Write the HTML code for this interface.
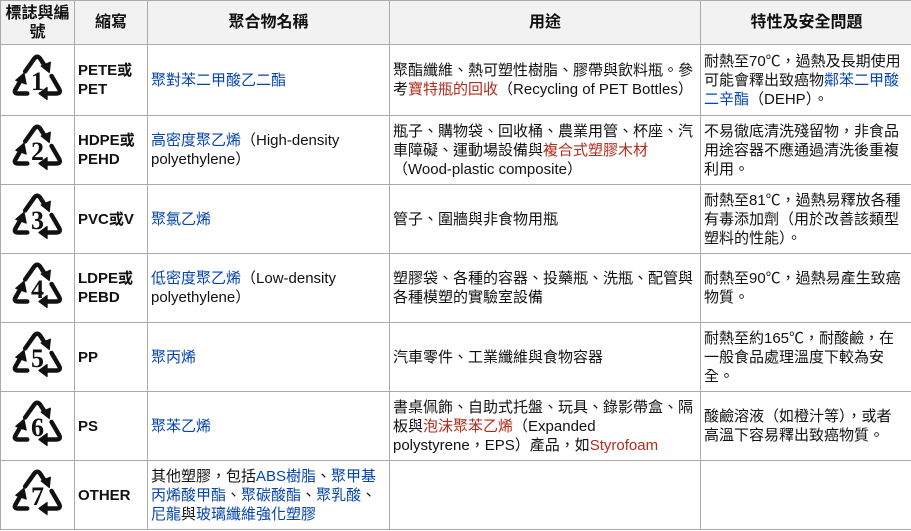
<!DOCTYPE html>
<html><head><meta charset="utf-8"><style>
body{margin:0;background:#fff;font-family:"Liberation Sans","Noto Sans CJK TC",sans-serif;font-size:15px;color:#111;}
table{border-collapse:collapse;position:absolute;left:0;top:0;width:912px;table-layout:fixed}
td,th{border:1px solid #aaa;padding:0 3px;line-height:19px;vertical-align:middle;text-align:left;white-space:nowrap;overflow:hidden}
th{background:#f2f2f2;text-align:center;font-weight:bold;font-size:16px;height:43px}
td{height:68px}
.b{font-weight:bold;font-size:15px}
a{color:#0645ad;text-decoration:none}
.r{color:#b32c1c}
.ic{text-align:center;padding:0}
</style></head><body>
<svg width="0" height="0" style="position:absolute"><defs>
<g id="tri" fill="none" stroke="#111" stroke-width="4" stroke-linejoin="round" stroke-linecap="round" transform="translate(1,1) scale(1.1)">
<path d="M11 15 L19.5 3 Q22 0 24.5 3 L29 10"/>
<path d="M25.5 10 L33 16 L34 6.5 Z" fill="#111" stroke-width="1"/>
<path d="M35 19 L42 31 Q44 35 39 35 L30 35"/>
<path d="M31 29.5 L23.5 35 L31 40.5 Z" fill="#111" stroke-width="1"/>
<path d="M13 35 L5 35 Q0 35 2.5 31 L7 23"/>
<path d="M2.5 23 L10 16.5 L12 26.5 Z" fill="#111" stroke-width="1"/>
</g></defs></svg>
<table>
<colgroup><col style="width:74px"><col style="width:73px"><col style="width:242px"><col style="width:311px"><col style="width:212px"></colgroup>
<tr><th style="line-height:19px">標誌與編<br>號</th><th>縮寫</th><th>聚合物名稱</th><th>用途</th><th>特性及安全問題</th></tr>
<tr style="height:71px"><td class="ic"><svg width="52" height="48"><use href="#tri"/><text x="25.5" y="36" font-size="26" font-weight="bold" text-anchor="middle" font-family="Liberation Serif" fill="#111">1</text></svg></td><td class="b">PETE或<br>PET</td><td><a>聚對苯二甲酸乙二酯</a></td><td>聚酯纖維、熱可塑性樹脂、膠帶與飲料瓶。參<br>考<span class="r">寶特瓶的回收</span>（Recycling of PET Bottles）</td><td>耐熱至70℃，過熱及長期使用<br>可能會釋出致癌物<a>鄰苯二甲酸</a><br><a>二辛酯</a>（DEHP）。</td></tr>
<tr><td class="ic"><svg width="52" height="48"><use href="#tri"/><text x="25.5" y="36" font-size="26" font-weight="bold" text-anchor="middle" font-family="Liberation Serif" fill="#111">2</text></svg></td><td class="b">HDPE或<br>PEHD</td><td><a>高密度聚乙烯</a>（High-density<br>polyethylene）</td><td>瓶子、購物袋、回收桶、農業用管、杯座、汽<br>車障礙、運動場設備與<span class="r">複合式塑膠木材</span><br>（Wood-plastic composite）</td><td>不易徹底清洗殘留物，非食品<br>用途容器不應通過清洗後重複<br>利用。</td></tr>
<tr><td class="ic"><svg width="52" height="48"><use href="#tri"/><text x="25.5" y="36" font-size="26" font-weight="bold" text-anchor="middle" font-family="Liberation Serif" fill="#111">3</text></svg></td><td class="b">PVC或V</td><td><a>聚氯乙烯</a></td><td>管子、圍牆與非食物用瓶</td><td>耐熱至81℃，過熱易釋放各種<br>有毒添加劑（用於改善該類型<br>塑料的性能）。</td></tr>
<tr><td class="ic"><svg width="52" height="48"><use href="#tri"/><text x="25.5" y="36" font-size="26" font-weight="bold" text-anchor="middle" font-family="Liberation Serif" fill="#111">4</text></svg></td><td class="b">LDPE或<br>PEBD</td><td><a>低密度聚乙烯</a>（Low-density<br>polyethylene）</td><td>塑膠袋、各種的容器、投藥瓶、洗瓶、配管與<br>各種模塑的實驗室設備</td><td>耐熱至90℃，過熱易產生致癌<br>物質。</td></tr>
<tr><td class="ic"><svg width="52" height="48"><use href="#tri"/><text x="25.5" y="36" font-size="26" font-weight="bold" text-anchor="middle" font-family="Liberation Serif" fill="#111">5</text></svg></td><td class="b">PP</td><td><a>聚丙烯</a></td><td>汽車零件、工業纖維與食物容器</td><td>耐熱至約165℃，耐酸鹼，在<br>一般食品處理溫度下較為安<br>全。</td></tr>
<tr><td class="ic"><svg width="52" height="48"><use href="#tri"/><text x="25.5" y="36" font-size="26" font-weight="bold" text-anchor="middle" font-family="Liberation Serif" fill="#111">6</text></svg></td><td class="b">PS</td><td><a>聚苯乙烯</a></td><td>書桌佩飾、自助式托盤、玩具、錄影帶盒、隔<br>板與<span class="r">泡沫聚苯乙烯</span>（Expanded<br>polystyrene，EPS）產品，如<span class="r">Styrofoam</span></td><td>酸鹼溶液（如橙汁等），或者<br>高溫下容易釋出致癌物質。</td></tr>
<tr><td class="ic"><svg width="52" height="48"><use href="#tri"/><text x="25.5" y="36" font-size="26" font-weight="bold" text-anchor="middle" font-family="Liberation Serif" fill="#111">7</text></svg></td><td class="b">OTHER</td><td>其他塑膠，包括<a>ABS樹脂</a>、<a>聚甲基</a><br><a>丙烯酸甲酯</a>、<a>聚碳酸酯</a>、<a>聚乳酸</a>、<br><a>尼龍</a>與<a>玻璃纖維強化塑膠</a></td><td></td><td></td></tr>
</table>
</body></html>
